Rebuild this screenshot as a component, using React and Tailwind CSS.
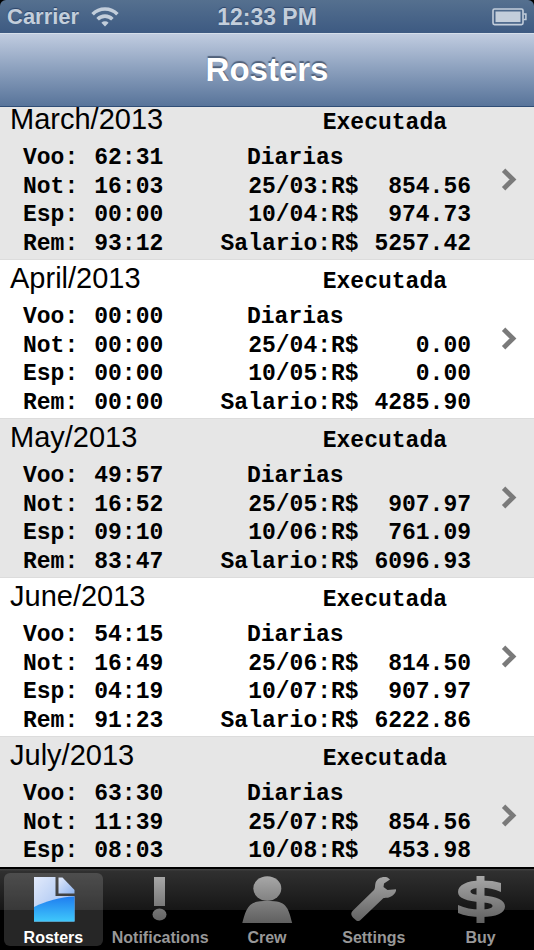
import React from "react";

const rosters = [
  { month: "March/2013", voo: "62:31", not: "16:03", esp: "00:00", rem: "93:12", d1: "25/03", v1: "854.56", d2: "10/04", v2: "974.73", salary: "5257.42" },
  { month: "April/2013", voo: "00:00", not: "00:00", esp: "00:00", rem: "00:00", d1: "25/04", v1: "0.00", d2: "10/05", v2: "0.00", salary: "4285.90" },
  { month: "May/2013", voo: "49:57", not: "16:52", esp: "09:10", rem: "83:47", d1: "25/05", v1: "907.97", d2: "10/06", v2: "761.09", salary: "6096.93" },
  { month: "June/2013", voo: "54:15", not: "16:49", esp: "04:19", rem: "91:23", d1: "25/06", v1: "814.50", d2: "10/07", v2: "907.97", salary: "6222.86" },
  { month: "July/2013", voo: "63:30", not: "11:39", esp: "08:03", d1: "25/07", v1: "854.56", d2: "10/08", v2: "453.98" },
];

function StatusBar() {
  return (
    <div className="grid h-[33px] shrink-0 grid-cols-[1fr_auto_1fr] items-center rounded-t-md bg-linear-to-b from-[#55708f] to-[#3d5a82] px-[7px] font-bold text-[#c3cedb] [text-shadow:0_-1px_1px_#2c4468]">
      <div className="flex items-center gap-3">
        <span className="text-[22px] leading-8">Carrier</span>
        <svg width="28" height="20" viewBox="0 0 28 20" fill="none" stroke="currentColor" strokeWidth="3.6" aria-label="Wi-Fi">
          <path d="M1.6 7.2a17.4 17.4 0 0 1 24.8 0" />
          <path d="M6.6 12.2a10.4 10.4 0 0 1 14.8 0" />
          <path d="M14 19.6l-3.6-3.8a5.2 5.2 0 0 1 7.2 0z" fill="currentColor" stroke="none" />
        </svg>
      </div>
      <span className="text-[23px] leading-8">12:33 PM</span>
      <svg className="justify-self-end" width="35" height="18" viewBox="0 0 35 18" fill="none" aria-label="Battery full">
        <rect x="1" y="1" width="30" height="15.6" rx="1.5" stroke="currentColor" strokeWidth="1.6" />
        <rect x="3.5" y="3.5" width="25" height="10.6" fill="currentColor" />
        <path d="M31.5 6h2.4v5.6h-2.4" stroke="currentColor" strokeWidth="1.5" />
      </svg>
    </div>
  );
}

function Hours({ label, value }) {
  return (
    <div className="flex items-center gap-4">
      <dt>{label}:</dt>
      <dd>{value}</dd>
    </div>
  );
}

function Amount({ label, value }) {
  return (
    <div className="flex items-center">
      <dt className="w-28 text-right">{label}:</dt>
      <dd className="flex flex-1 justify-between">
        <span>R$</span>
        <span>{value}</span>
      </dd>
    </div>
  );
}

function RosterRow({ r }) {
  return (
    <li className="border-b border-[#dcdcdc] odd:bg-[#e6e6e6] even:bg-white">
      <a href="#roster" className="flex items-center pr-[17px] pl-[10px] text-black">
        <div className="flex-1">
          <div className="flex h-[43px] items-start justify-between pr-6">
            <h2 className="text-[29px] leading-9">{r.month}</h2>
            <span className="pt-[6px] font-['Liberation_Mono',monospace] text-[23px] leading-8 font-bold">Executada</span>
          </div>
          <div className="flex h-[115px] justify-between pb-px pl-[13px] font-['Liberation_Mono',monospace] text-[23px] leading-7 font-bold">
            <dl className="grid grid-rows-4">
              <Hours label="Voo" value={r.voo} />
              <Hours label="Not" value={r.not} />
              <Hours label="Esp" value={r.esp} />
              {r.rem && <Hours label="Rem" value={r.rem} />}
            </dl>
            <dl className="grid w-[252px] grid-rows-4">
              <div className="flex items-center pl-7">
                <dt>Diarias</dt>
              </div>
              <Amount label={r.d1} value={r.v1} />
              <Amount label={r.d2} value={r.v2} />
              {r.salary && <Amount label="Salario" value={r.salary} />}
            </dl>
          </div>
        </div>
        <svg className="ml-[30px] shrink-0" width="16" height="24" viewBox="0 0 16 24" fill="none" stroke="#7a7a7a" strokeWidth="4.8" aria-hidden="true">
          <path d="M2.600 2.200L12 11.500L2.600 20.800" />
        </svg>
      </a>
    </li>
  );
}

function IconDefs() {
  return (
    <svg width="0" height="0" className="absolute" aria-hidden="true">
      <defs>
        <linearGradient id="grey" gradientUnits="userSpaceOnUse" x1="0" y1="0" x2="0" y2="48">
          <stop offset="0" stopColor="#a8a8a8" />
          <stop offset="1" stopColor="#5e5e5e" />
        </linearGradient>
        <linearGradient id="paper" x1="0" y1="0" x2="1" y2="1">
          <stop offset="0" stopColor="#e2eafb" />
          <stop offset="1" stopColor="#8fb4ee" />
        </linearGradient>
        <linearGradient id="water" x1="0" y1="0" x2="0" y2="1">
          <stop offset="0" stopColor="#1f7df0" />
          <stop offset="1" stopColor="#3fc8fb" />
        </linearGradient>
      </defs>
    </svg>
  );
}

const icons = {
  Rosters: (
    <>
      <path d="M5 1H26.500V20H45.500V45.500H5Z" fill="url(#paper)" />
      <path d="M5 31C17 25 31 21 45.500 20.500V45.500H5Z" fill="url(#water)" />
      <path d="M29.500 1.500H33.500L45.500 14V17.500H29.500Z" fill="url(#paper)" />
    </>
  ),
  Notifications: (
    <g fill="url(#grey)">
      <path d="M18 1H29V30H18Z" />
      <ellipse cx="23.500" cy="38.500" rx="7" ry="6" />
    </g>
  ),
  Crew: (
    <g fill="url(#grey)">
      <ellipse cx="24.300" cy="12.500" rx="14" ry="12.200" />
      <path d="M-.7 47C2 37 4 26 17 25.300Q24.300 24 31.500 25.300C45 26 46.500 37 49.200 47Z" />
    </g>
  ),
  Settings: (
    <path
      d="M37.500 1.500C33 0 27 2 25.500 7C24.800 10 25.400 12 24 14L2.500 35C.5 37.500 1 39.500 4 42.500C7 45.500 8.500 46 11 43.500L33 22.500C35 21.200 38 22.500 41 20.500C45 18.500 46.500 15 46 13.200L37.500 14L33.500 11L34 7.500L40 3.500Z"
      fill="url(#grey)"
    />
  ),
  Buy: (
    <g fill="url(#grey)">
      <path d="M19.500 0H27.500V47H19.500Z" />
      <path d="M44 7V16C37 13 31 11.800 25 11.800C17 11.800 13.500 13.500 13.500 15.500C13.500 18 18 18.700 26 19.500C40 20.800 48 24 48 30.500C48 37 39 41 25 41C15 41 7 39.500 1 37V29C8 32 15 33.500 23 33.500C31 33.500 35.500 32 35.500 30C35.500 27.500 31 27 24 26.300C10 25 1 22.500 1 16C1 9 10 4.500 24 4.500C32 4.500 39 5.300 44 7Z" />
    </g>
  ),
};

function TabBar() {
  return (
    <nav className="flex h-[83px] shrink-0 border-t-2 border-black bg-[linear-gradient(to_bottom,#4a4a4a_0px,#303030_2px,#161616_41px,#000_41px)] pt-1 pb-1">
      {Object.keys(icons).map((name) => (
        <button
          key={name}
          type="button"
          aria-current={name === "Rosters" ? "page" : undefined}
          className="mx-1 flex flex-1 basis-0 flex-col items-center gap-1 rounded-md pt-[3px] text-[#989898] aria-[current=page]:bg-white/15 aria-[current=page]:text-white"
        >
          <svg width="48" height="48" viewBox="0 0 48 48" className="overflow-visible" aria-hidden="true">
            {icons[name]}
          </svg>
          <span className="text-base leading-5 font-bold">{name}</span>
        </button>
      ))}
    </nav>
  );
}

export default function App() {
  return (
    <div className="flex h-screen flex-col overflow-hidden bg-black font-['Liberation_Sans',Arial,sans-serif]">
      <IconDefs />
      <StatusBar />
      <header className="flex h-[74px] shrink-0 items-center justify-center border-t border-b border-t-[#d5deea] border-b-[#2f4d76] bg-linear-to-b from-[#c0cce0] to-[#58749a]">
        <h1 className="text-[33px] leading-10 font-bold text-white [text-shadow:0_-2px_1px_#50617a]">Rosters</h1>
      </header>
      <main className="min-h-0 flex-1 overflow-hidden bg-white">
        <ul className="-mt-[6px]">
          {rosters.map((r) => (
            <RosterRow key={r.month} r={r} />
          ))}
        </ul>
      </main>
      <TabBar />
    </div>
  );
}
